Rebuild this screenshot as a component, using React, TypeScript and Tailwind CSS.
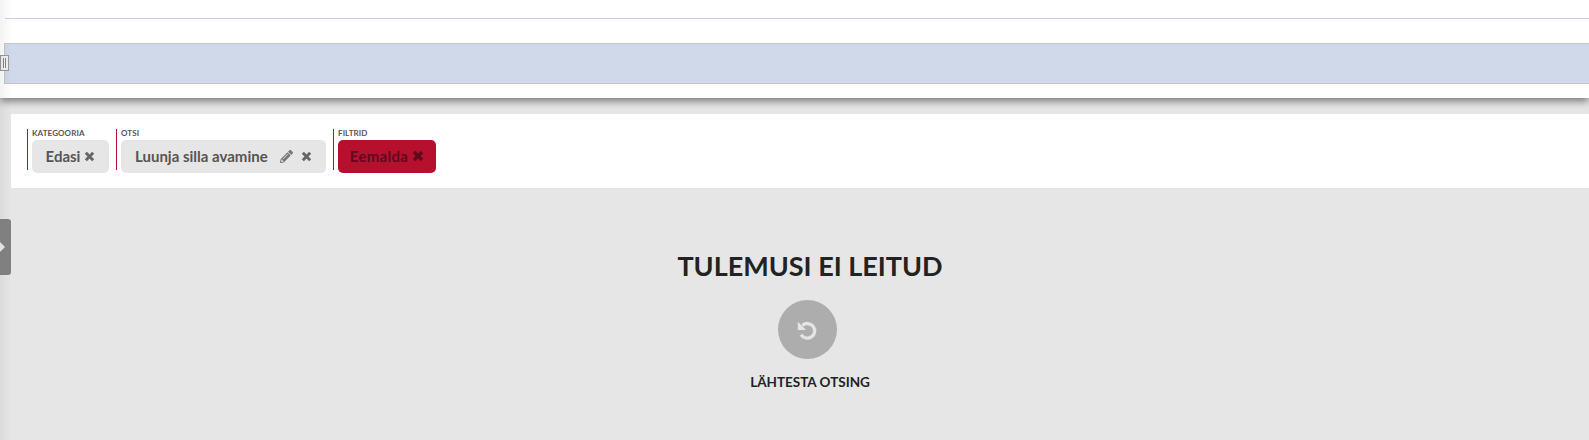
import { FaPencilAlt } from "react-icons/fa";

type FilterGroupProps = {
  label: string;
  children: React.ReactNode;
};

function CloseIcon({ className }: { className?: string }) {
  return (
    <svg viewBox="0 0 12 12" className={className} fill="none" stroke="currentColor" strokeWidth="3.2" aria-hidden="true">
      <path d="M2 2l8 8M10 2l-8 8" />
    </svg>
  );
}

function ResetIcon({ className }: { className?: string }) {
  return (
    <svg viewBox="0 0 24 24" className={className} aria-hidden="true">
      <path d="M7 7a8 8 0 1 1-1.5 10" fill="none" stroke="currentColor" strokeWidth="3.6" />
      <path d="M2 3v9h9z" fill="currentColor" />
    </svg>
  );
}

function FilterGroup({ label, children }: FilterGroupProps) {
  return (
    <div className="flex h-[41px] flex-col border-l border-[#b7102f] pl-1">
      <span className="h-[11px] text-[8px] font-bold uppercase leading-[9px] tracking-[0.1px] text-[#555]">{label}</span>
      <div className="-mb-[3px] mt-0">{children}</div>
    </div>
  );
}

export default function App() {
  return (
    <div className="relative h-[440px] w-full overflow-hidden bg-[#e6e6e6] font-['Lato',sans-serif]">
      <div className="pointer-events-none absolute inset-y-0 left-0 z-10 w-3 bg-gradient-to-r from-black/5 to-transparent" />

      <header className="h-[98px] bg-white pl-[5px] pt-[18px] shadow-[0_3px_8px_rgba(0,0,0,0.5)]">
        <div className="h-px bg-[#c5d3e8]" />
        <div className="relative -ml-px mt-6 h-[41px] border-y border-l border-[#c6c6c6] bg-[#cfd9ea]">
          <div className="absolute -left-[5px] top-[11px] flex h-4 w-[9px] items-center justify-center gap-px border border-[#999] bg-[#f0f0f0]">
            <span className="h-2.5 w-px bg-[#888]" />
            <span className="h-2.5 w-px bg-[#888]" />
          </div>
        </div>
      </header>

      <main className="pl-[11px] pt-4">
        <section className="flex h-[74px] items-start gap-[7px] bg-white pl-4 pt-[15px]">
          <FilterGroup label="Kategooria">
            <div className="flex h-[33px] w-[77px] items-center justify-center gap-1 rounded-[5px] bg-[#e6e6e6] pb-px text-[15px] font-bold text-[#555]">
              Edasi
              <CloseIcon className="h-[11px] w-[11px] text-[#666]" />
            </div>
          </FilterGroup>
          <FilterGroup label="Otsi">
            <div className="flex h-[33px] w-[205px] items-center rounded-[5px] bg-[#e6e6e6] pb-px pl-[14px] text-[15px] font-bold text-[#555]">
              Luunja silla avamine
              <FaPencilAlt className="ml-auto h-[13px] w-[13px] text-[#777]" />
              <CloseIcon className="ml-[8px] mr-[14px] h-[11px] w-[11px] text-[#666]" />
            </div>
          </FilterGroup>
          <FilterGroup label="Filtrid">
            <div className="flex h-[33px] w-[98px] items-center justify-center gap-1 rounded-[5px] bg-[#b7102f] pb-px text-[15px] font-bold tracking-[0.3px] text-[#5e0a1e]">
              Eemalda
              <CloseIcon className="h-3 w-3" />
            </div>
          </FilterGroup>
        </section>

        <section className="flex flex-col items-center pl-5 pt-[62px]">
          <h1 className="text-[27px] font-bold leading-[32px] text-[#222]">TULEMUSI EI LEITUD</h1>
          <button
            type="button"
            className="mr-[6px] mt-[18px] flex h-[59px] w-[59px] items-center justify-center rounded-full bg-[#adadad] text-[#e5e5e5]"
          >
            <ResetIcon className="h-[22px] w-[22px]" />
          </button>
          <p className="mt-[15px] text-[13.5px] font-bold leading-4 text-[#222]">LÄHTESTA OTSING</p>
        </section>
      </main>

      <div className="absolute left-0 top-[219px] z-20 flex h-[56px] w-[11px] items-center rounded-r-[3px] bg-[#808080]">
        <span className="h-0 w-0 border-y-[5px] border-l-[5px] border-y-transparent border-l-[#dfe3e8]" />
      </div>
    </div>
  );
}
